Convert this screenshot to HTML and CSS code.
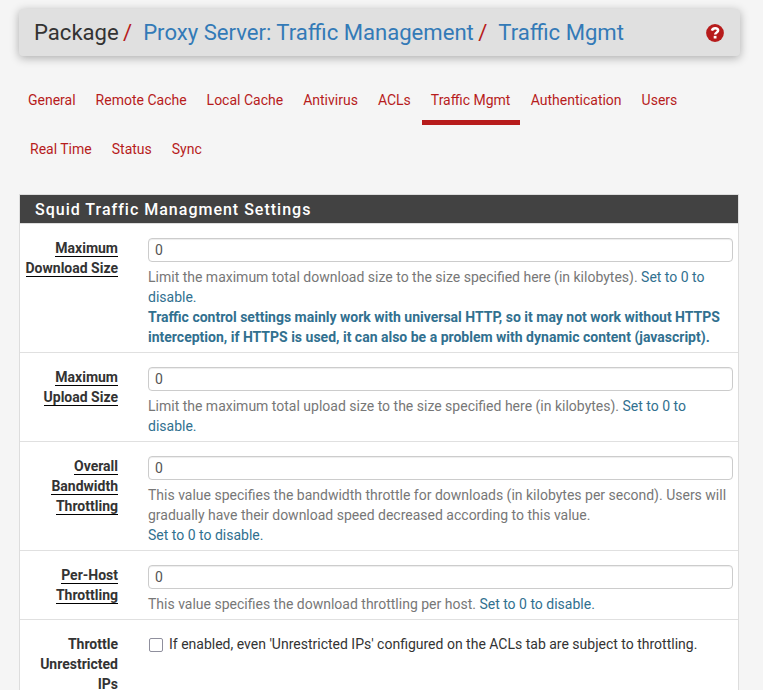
FILE: index.html
```html
<!DOCTYPE html>
<html lang="en">
<head>
<meta charset="utf-8">
<title>Proxy Server: Traffic Management</title>
<link rel="stylesheet" href="styles.css">
</head>
<body>
<header class="header">
  <ol class="breadcrumb">
    <li>Package</li>
    <li><a>Proxy Server: Traffic Management</a></li>
    <li><a>Traffic Mgmt</a></li>
  </ol>
  <svg class="help" viewBox="0 0 18 18"><circle cx="9" cy="9" r="8.9"/><path d="M5.900 6.700C6.500 5 7.500 4.300 9.100 4.300c1.800 0 3 1 3 2.300 0 1.900-2.900 1.900-2.900 3.900"/><rect x="7.700" y="11.900" width="2.800" height="2.600"/></svg>
</header>
<nav class="tabs">
  <a>General</a><a>Remote Cache</a><a>Local Cache</a><a>Antivirus</a><a>ACLs</a><a class="active">Traffic Mgmt</a><a>Authentication</a><a>Users</a><a>Real Time</a><a>Status</a><a>Sync</a>
</nav>
<main class="panel">
  <h2>Squid Traffic Managment Settings</h2>
  <div class="row">
    <label><span>Maximum Download Size</span></label>
    <div class="field"><input type="text" value="0">
      <p>Limit the maximum total download size to the size specified here (in kilobytes). <em>Set to 0 to disable.</em><br><strong>Traffic control settings mainly work with universal HTTP, so it may not work without HTTPS interception, if HTTPS is used, it can also be a problem with dynamic content (javascript).</strong></p></div>
  </div>
  <div class="row">
    <label><span>Maximum Upload Size</span></label>
    <div class="field"><input type="text" value="0">
      <p>Limit the maximum total upload size to the size specified here (in kilobytes). <em>Set to 0 to disable.</em></p></div>
  </div>
  <div class="row">
    <label><span>Overall Bandwidth Throttling</span></label>
    <div class="field"><input type="text" value="0">
      <p>This value specifies the bandwidth throttle for downloads (in kilobytes per second). Users will gradually have their download speed decreased according to this value.<br><em>Set to 0 to disable.</em></p></div>
  </div>
  <div class="row">
    <label><span>Per-Host Throttling</span></label>
    <div class="field"><input type="text" value="0">
      <p>This value specifies the download throttling per host. <em>Set to 0 to disable.</em></p></div>
  </div>
  <div class="row">
    <label>Throttle Unrestricted IPs</label>
    <div class="field check"><input type="checkbox"><span>If enabled, even 'Unrestricted IPs' configured on the ACLs tab are subject to throttling.</span></div>
  </div>
</main>
</body>
</html>
```
FILE: styles.css
```css
* { box-sizing: border-box; }
html, body { height: 690px; overflow: hidden; }
body { display: flex; flex-direction: column; margin: 0; padding: 9px 24px 0 19px; background: #f5f5f5; color: #333; font: 14px/20px Roboto, sans-serif; }
.header { display: flex; flex: none; align-items: center; justify-content: space-between; height: 47px; margin-right: -1px; padding: 0 16px 0 15px; background: #e0e0e0; border-radius: 4px; box-shadow: 0 2px 10px rgba(0,0,0,.3); }
.breadcrumb { display: flex; margin: 0; padding: 0 0 2px; list-style: none; font-size: 22.1px; line-height: 32px; }
.breadcrumb li + li::before { content: "/"; color: #b71c1c; margin: 0 11px 0 4.3px; }
.breadcrumb a { color: #337ab7; }
.help { width: 18px; height: 18px; }
.help circle { fill: #b71c1c; }
.help path { fill: none; stroke: #fff; stroke-width: 2.5; }
.help rect { fill: #fff; }
.tabs { display: flex; flex: none; flex-wrap: wrap; margin: 20px 0; }
.tabs a { height: 49px; padding: 14px 9px 10px; color: #b71c1c; }
.tabs a + a { margin-left: 2px; }
.tabs .active { padding-right: 9.3px; box-shadow: inset 0 -5px #b71c1c; }
.panel { flex: 1; min-height: 0; background: #fff; border: 1px solid #ddd; border-bottom: 0; }
.panel h2 { margin: 0; height: 29px; padding: 0 15px; background: #424242; background-clip: padding-box; border-bottom: 1px solid #ddd; color: #fff; font: 500 16px/29px Roboto, sans-serif; letter-spacing: 1px; }
.row { display: flex; padding: 14px 5px 5px; border-bottom: 1px solid #e0e0e0; }
.row:last-child { padding-bottom: 0; border-bottom: 0; margin-bottom: -4px; }
.row label { width: 93px; margin-right: 30px; text-align: right; font-weight: 700; }
.row label span { border-bottom: 1px solid #000; }
.field { flex: 1; }
.field input[type=text] { display: block; width: 100%; height: 24px; margin: 0; padding: 2px 6px; border: 1px solid #ccc; border-radius: 4px; color: #555; font: 14px/20px Roboto, sans-serif; box-shadow: inset 0 1px 1px rgba(0,0,0,.075); }
.field p { margin: 5px 0 0; color: #777; }
.field em, .field strong { font-style: normal; color: #31708f; }
.check { display: flex; align-items: flex-start; }
.check input { appearance: none; width: 14px; height: 14px; margin: 4px 6px 0 1px; border: 1px solid #8f8f9d; border-radius: 2px; background: #fff; }
```
